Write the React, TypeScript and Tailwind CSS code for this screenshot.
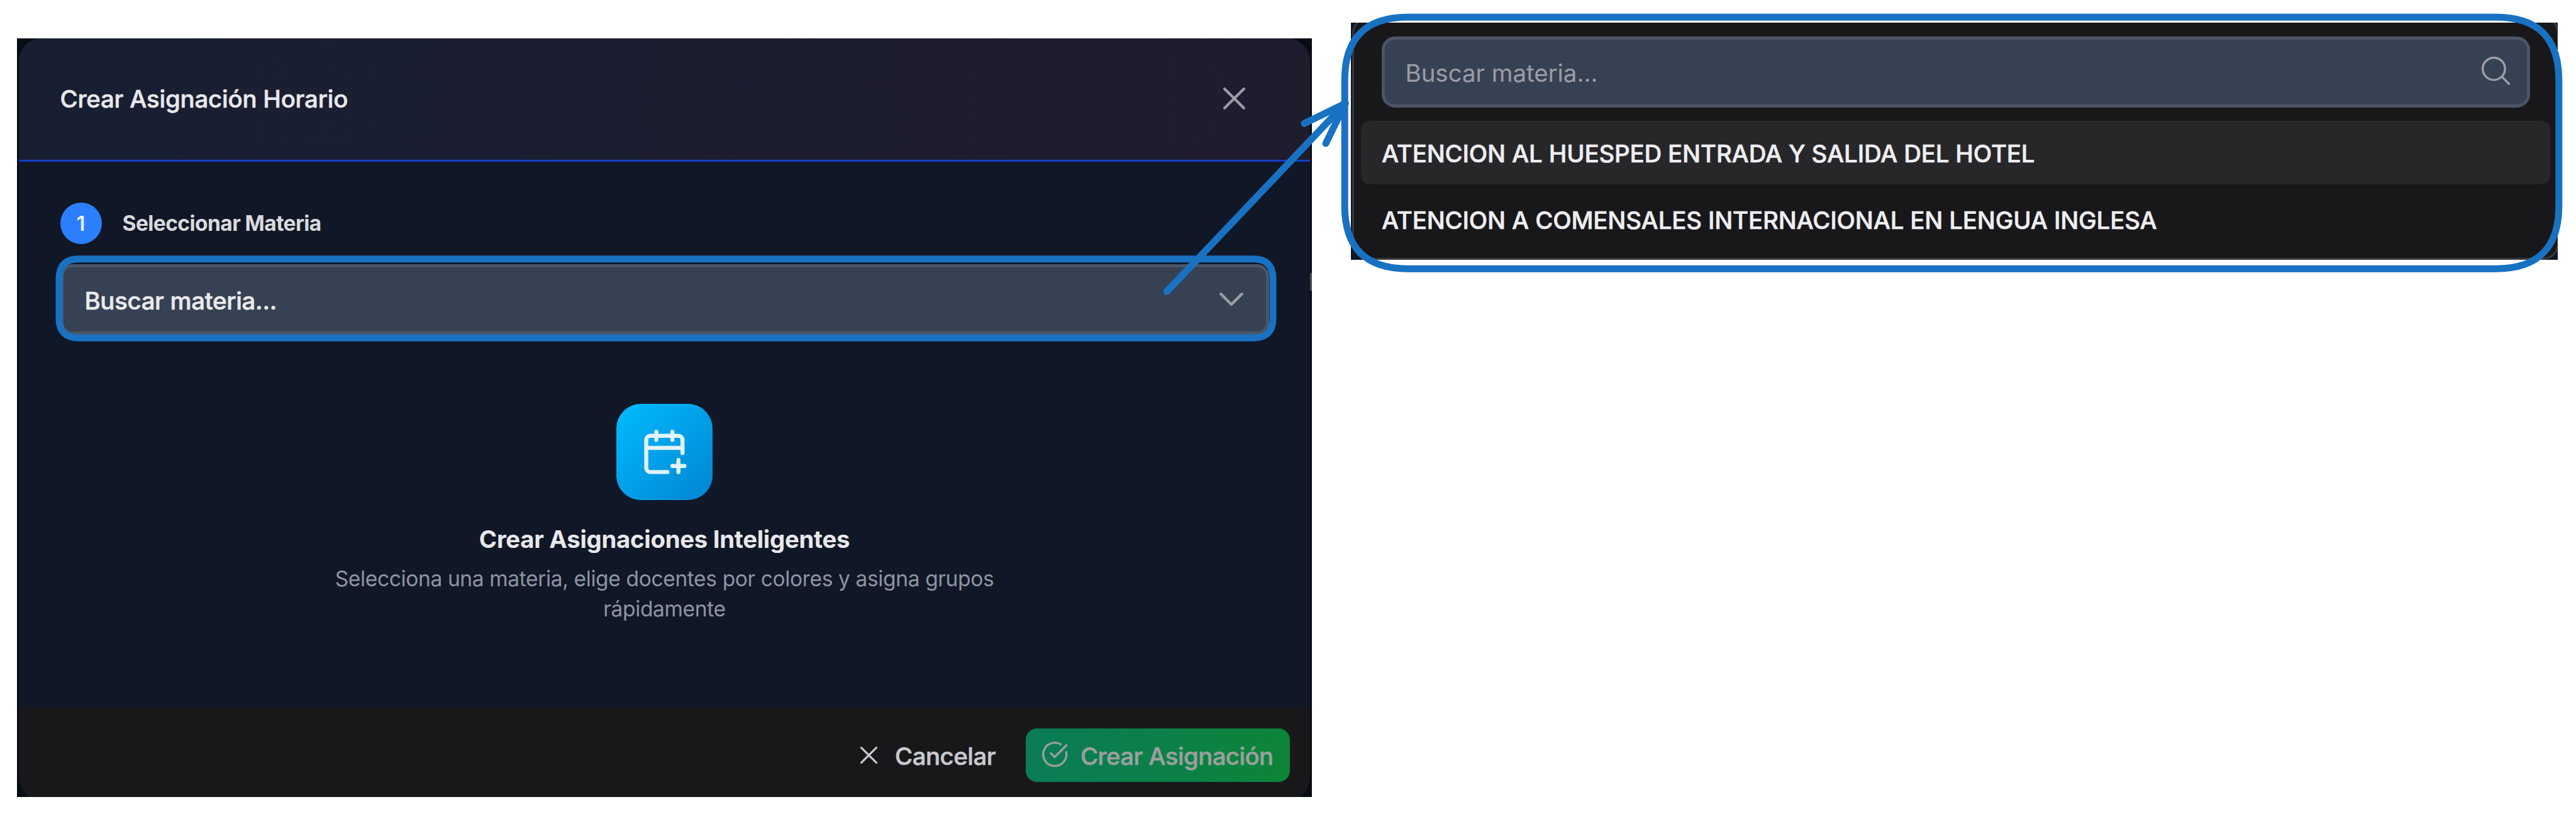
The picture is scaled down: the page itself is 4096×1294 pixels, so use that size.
import type { ReactNode } from "react";

const Stroke = ({
  className,
  viewBox,
  width,
  children,
}: {
  className: string;
  viewBox: string;
  width: number;
  children: ReactNode;
}) => (
  <svg
    className={className}
    viewBox={viewBox}
    fill="none"
    stroke="currentColor"
    strokeWidth={width}
    strokeLinecap="round"
    strokeLinejoin="round"
  >
    {children}
  </svg>
);

function DialogHeader() {
  return (
    <header className="flex h-[197px] items-center justify-between border-b-[3px] border-[#153fc6] bg-linear-to-r/srgb from-[#181f32] to-[#1f1c2e] pr-[103px] pb-px pl-[65.5px]">
      <h1 className="text-[38.4px] leading-[48px] font-medium tracking-[-0.22px] whitespace-nowrap text-[#e8e8eb] [-webkit-text-stroke:0.6px_#e8e8eb]">
        Crear Asignación Horario
      </h1>
      <Stroke className="size-[35px] text-[#9c9ca5]" viewBox="0 0 35 35" width={4.2}>
        <path d="M2.2 2.2 32.8 32.8M32.8 2.2 2.2 32.8" />
      </Stroke>
    </header>
  );
}

function SubjectField() {
  return (
    <section>
      <div className="flex items-center">
        <span className="flex size-[66px] items-center justify-center rounded-full bg-[#2b7fff] text-[33px] leading-none font-semibold text-[#e6efff]">
          1
        </span>
        <span className="ml-[33px] text-[33.6px] leading-[44px] font-bold tracking-[-0.6px] whitespace-nowrap text-[#d8dade]">
          Seleccionar Materia
        </span>
      </div>
      <div className="mt-8 flex h-[112px] items-center justify-between rounded-[19px] border-[5px] border-[#4a5565] bg-[#364153] pr-[36px] pl-[34px]">
        <span className="pt-[3px] text-[38.4px] leading-[48px] font-medium tracking-[-0.34px] whitespace-nowrap text-[#eaeaed] [-webkit-text-stroke:0.6px_#eaeaed]">
          Buscar materia...
        </span>
        <Stroke className="-mt-px h-[22px] w-[38px] text-[#9c9ca5]" viewBox="0 0 38 22" width={4.4}>
          <path d="M2.4 2.4 19 19 35.6 2.4" />
        </Stroke>
      </div>
    </section>
  );
}

function EmptyState() {
  return (
    <section className="mt-[109.5px] flex flex-col items-center">
      <div className="flex size-[153.6px] items-center justify-center rounded-[39px] bg-linear-to-br from-[#00bcff] to-[#0084d1]">
        <Stroke className="size-[76.8px] text-[#e1f3fd]" viewBox="0 0 24 24" width={2}>
          <path d="M16 19h6" />
          <path d="M16 2v4" />
          <path d="M19 16v6" />
          <path d="M21 12.598V6a2 2 0 0 0-2-2H5a2 2 0 0 0-2 2v14a2 2 0 0 0 2 2h8.5" />
          <path d="M3 10h18" />
          <path d="M8 2v4" />
        </Stroke>
      </div>
      <h2 className="mt-[33px] text-[38.4px] leading-[58px] font-bold tracking-[-0.31px] whitespace-nowrap text-[#e8e8eb]">
        Crear Asignaciones Inteligentes
      </h2>
      <p className="mt-[9.5px] w-[1080px] text-center text-[33.6px] leading-[48.6px] tracking-[-0.4px] text-[#8d94a2]">
        Selecciona una materia, elige docentes por colores y asigna grupos rápidamente
      </p>
    </section>
  );
}

function DialogFooter() {
  return (
    <footer className="flex h-[148px] items-start justify-end bg-[#18181a] pt-[33px] pr-[32.5px]">
      <button className="flex h-[85px] items-center text-[#c8c9ce]">
        <Stroke className="size-[27px]" viewBox="0 0 27 27" width={3.2}>
          <path d="M1.6 1.6 25.4 25.4M25.4 1.6 1.6 25.4" />
        </Stroke>
        <span className="ml-[28px] w-[207.5px] pt-[3px] text-left text-[38.4px] leading-[48px] font-medium tracking-[-0.5px] [-webkit-text-stroke:0.6px_#c8c9ce]">
          Cancelar
        </span>
      </button>
      <button className="flex h-[85px] w-[420px] items-center rounded-[18px] bg-linear-to-r from-[#0b7b56] to-[#0c8538] pl-6 text-[#9aa09d]">
        <Stroke className="-mt-[3px] size-[44.4px]" viewBox="0 0 24 24" width={1.8}>
          <path d="M21.801 10A10 10 0 1 1 17 3.335" />
          <path d="m8.6 11.1 3.3 3.2L22 4.2" />
        </Stroke>
        <span className="ml-[19px] pt-[3px] text-[38.4px] leading-[48px] font-medium tracking-[-0.6px] whitespace-nowrap [-webkit-text-stroke:0.6px_#9aa09d]">
          Crear Asignación
        </span>
      </button>
    </footer>
  );
}

function Dialog() {
  return (
    <div className="mt-[61px] ml-[27px] flex h-[1206px] w-[2059px] flex-none overflow-hidden bg-[#080c14]">
      <div className="-mt-px ml-[3px] flex h-[1213px] w-[2053px] flex-none flex-col overflow-hidden rounded-[38px] bg-[#101726]">
        <DialogHeader />
        <main className="h-[868px] flex-none px-[65.5px] pt-[65px]">
          <SubjectField />
          <EmptyState />
        </main>
        <DialogFooter />
      </div>
      <div className="mt-[373px] h-[28px] w-[3px] bg-[#414f50]" />
    </div>
  );
}

const subjects = [
  { name: "ATENCION AL HUESPED ENTRADA Y SALIDA DEL HOTEL", active: true },
  { name: "ATENCION A COMENSALES INTERNACIONAL EN LENGUA INGLESA", active: false },
];

function SearchPanel() {
  return (
    <div className="mt-[36px] ml-[62px] h-[377px] w-[1919px] flex-none overflow-hidden bg-[#0e1726]">
      <div className="-mt-[9px] ml-[2px] h-[386px] w-[1919px] rounded-[26px] border-[3px] border-[#38383e] bg-[#18181a] pt-[27.5px]">
        <div className="ml-[43.5px] flex h-[113px] w-[1826px] items-center justify-between rounded-[21px] border-[5.5px] border-[#4a5565] bg-[#364153] pr-[27px] pl-[33px]">
          <span className="pt-[3px] text-[38.5px] leading-[48px] tracking-[-0.05px] whitespace-nowrap text-[#9c9ca5]">
            Buscar materia...
          </span>
          <Stroke className="-mt-[3px] size-[45px] text-[#9f9fa9]" viewBox="0 0 45 45" width={3.4}>
            <circle cx="19.4" cy="19.4" r="17.7" />
            <path d="M32.6 32.4 43.4 43.2" />
          </Stroke>
        </div>
        <ul className="mt-[21px] ml-[11px] flex w-[1891px] flex-col gap-[5px]">
          {subjects.map((s) => (
            <li
              key={s.name}
              className={
                s.active
                  ? "flex h-[101px] items-center rounded-[14px] bg-[#27272a] pt-[3px] pl-[33px]"
                  : "flex h-[101px] items-center rounded-[14px] pt-[3px] pl-[33px]"
              }
            >
              <span className="text-[38.4px] leading-[48px] font-medium tracking-[-0.16px] whitespace-nowrap text-[#eeeef0] [-webkit-text-stroke:0.6px_#eeeef0]">
                {s.name}
              </span>
            </li>
          ))}
        </ul>
      </div>
    </div>
  );
}

/* Hand-drawn callouts that link the select to its open search panel. */
function Annotations() {
  return (
    <svg
      className="pointer-events-none absolute inset-0 h-[1294px] w-[4096px]"
      viewBox="0 0 4096 1294"
      fill="none"
      stroke="#1971c2"
      strokeWidth="11"
      strokeLinecap="round"
      strokeLinejoin="round"
    >
      <path d="M125 411.8H1993Q2024.1 411.8 2024.1 443V506Q2024.1 537.2 1993 537.2H125Q94 537.2 94 506V443Q94 411.8 125 411.8Z" />
      <path d="M2238.2 27.3H3968.8Q4068.8 27.3 4068.8 127.3V327.2Q4068.8 427.2 3968.8 427.2H2238.2Q2138.2 427.2 2138.2 327.2V127.3Q2138.2 27.3 2238.2 27.3Z" />
      <path d="M1855.4 463.4 2139.2 164.4" />
      <path d="M2074 196.2 2139.2 164.4 2108.1 228.1" />
    </svg>
  );
}

export default function App() {
  return (
    <div className="relative flex h-[1294px] w-[4096px] items-start overflow-hidden bg-white font-['Inter',sans-serif]">
      <Dialog />
      <SearchPanel />
      <Annotations />
    </div>
  );
}
